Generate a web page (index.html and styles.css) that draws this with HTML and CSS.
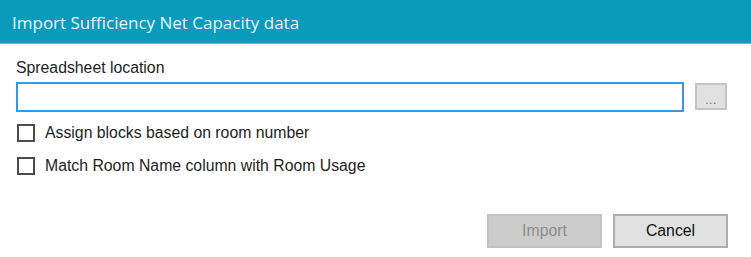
FILE: index.html
```html
<!DOCTYPE html>
<html lang="en">
<head>
    <meta charset="UTF-8">
    <meta name="viewport" content="width=device-width, initial-scale=1.0">
    <title>Import Sufficiency Net Capacity data</title>
    <link rel="stylesheet" href="styles.css">
</head>
<body>
    <div class="dialog">
        <div class="title-bar">Import Sufficiency Net Capacity data</div>

        <div class="dialog-body">
            <div class="field-label">Spreadsheet location</div>
            <div class="path-row">
                <input type="text" class="path-input" id="path-input">
                <button class="browse-btn" id="browse-btn"><span class="dots">...</span></button>
            </div>

            <label class="check-row">
                <span class="check-box"></span>
                <span>Assign blocks based on room number</span>
            </label>
            <label class="check-row">
                <span class="check-box"></span>
                <span>Match Room Name column with Room Usage</span>
            </label>
        </div>

        <div class="dialog-actions">
            <button class="btn btn-disabled" disabled>Import</button>
            <button class="btn">Cancel</button>
        </div>
    </div>
</body>
</html>
```

FILE: styles.css
```css
body {
    margin: 0;
    padding: 0;
    background-color: #fff;
    font-family: "Liberation Sans", Arial, sans-serif;
    font-size: 15.8px;
    color: #1e1e1e;
}

.dialog {
    width: 751px;
    height: 257px;
    display: flex;
    flex-direction: column;
}

.title-bar {
    height: 44px;
    box-sizing: border-box;
    padding: 11px 0 0 12px;
    background-color: #0a9abc;
    border-bottom: 1px solid #5cc3d9;
    color: #e9f6fa;
    font-family: "Open Sans", sans-serif;
    font-size: 17px;
}

.dialog-body {
    padding: 15px 24px 0 16px;
}

.field-label {
    height: 23px;
    line-height: 18px;
}

.path-row {
    display: flex;
    align-items: flex-start;
    gap: 11px;
}

.path-input {
    flex: 1;
    height: 30px;
    box-sizing: border-box;
    margin: 0;
    border: 2px solid #3b96e3;
    background-color: #fff;
    outline: none;
}

.browse-btn {
    width: 32px;
    height: 27px;
    margin-top: 1px;
    padding: 0;
    box-sizing: border-box;
    background-color: #e1e1e1;
    border: 2px solid #c4c4c4;
    display: flex;
    justify-content: center;
    align-items: flex-end;
}

.dots {
    font-size: 12px;
    line-height: 12px;
    letter-spacing: 0.5px;
    color: #7a5a8a;
    padding-bottom: 2px;
}

.check-row {
    display: flex;
    align-items: center;
    gap: 10px;
    height: 20px;
    margin-top: 11px;
    padding-left: 1px;
}

.check-row + .check-row {
    margin-top: 13px;
}

.check-box {
    width: 18px;
    height: 18px;
    box-sizing: border-box;
    border: 2px solid #4d4d4d;
    background-color: #fff;
}

.dialog-actions {
    display: flex;
    justify-content: flex-end;
    gap: 11px;
    padding: 38px 23px 0 0;
}

.btn {
    width: 115px;
    height: 34px;
    box-sizing: border-box;
    background-color: #e1e1e1;
    border: 2px solid #adadad;
    font-family: "Liberation Sans", Arial, sans-serif;
    font-size: 15.8px;
    color: #111;
}

.btn-disabled {
    background-color: #cccccc;
    border-color: #c2c2c2;
    color: #8d8d8d;
}
```
